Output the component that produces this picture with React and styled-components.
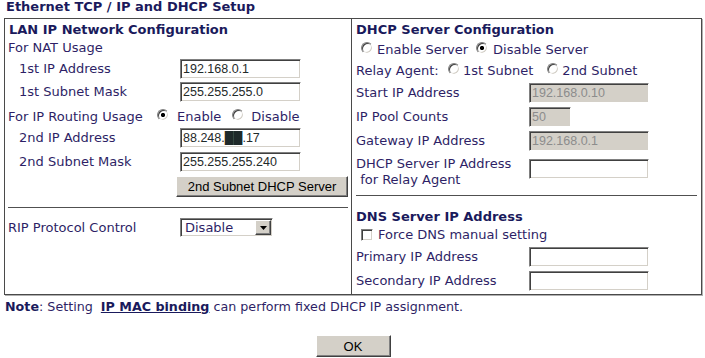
import React from 'react';
import styled, { createGlobalStyle } from 'styled-components';

const Global = createGlobalStyle`
  html, body { margin: 0; padding: 0; background: #fff; }
  body {
    font-family: "DejaVu Sans", Verdana, sans-serif;
    font-size: 13px;
    line-height: 16px;
    color: #2e1f66;
  }
`;

const Page = styled.div`
  width: 698px;
  padding: 0 4px;
`;

const Title = styled.div`
  height: 18px;
  padding-left: 2px;
  font-weight: bold;
  font-size: 13px;
  line-height: 14px;
  color: #1a1a5c;
  white-space: nowrap;
`;

const Table = styled.div`
  display: grid;
  grid-template-columns: 347px 348px;
  height: 275px;
  border: 1px solid #4a4a4a;
  box-shadow: 1px 1px 0 #b0b0b0;
`;

const Cell = styled.div`
  display: flex;
  flex-direction: column;
  padding-top: 3px;
  border-right: ${p => (p.$divider ? '1px solid #4a4a4a' : 'none')};
`;

const SectionHead = styled.div`
  height: ${p => p.$h || 17}px;
  margin-top: ${p => p.$mt || 0}px;
  padding-left: 4px;
  font-weight: bold;
  color: #1a1a5c;
  white-space: nowrap;
`;

const Row = styled.div`
  display: flex;
  align-items: ${p => p.$align || 'center'};
  height: ${p => p.$h || 24}px;
  box-sizing: border-box;
  padding-left: ${p => p.$pl || 0}px;
  padding-top: ${p => p.$pt || 0}px;
  margin-top: ${p => p.$mt || 0}px;
  white-space: nowrap;
`;

const Label = styled.span`
  flex: none;
  width: ${p => (p.$w ? `${p.$w}px` : 'auto')};
  padding-top: ${p => p.$pt || 0}px;
  white-space: nowrap;
`;

const TextInput = styled.input`
  flex: none;
  box-sizing: border-box;
  width: ${p => p.$w || 120}px;
  height: 20px;
  margin: ${p => p.$mt || 0}px 0 0 0;
  padding: 0 2px;
  font-family: "Liberation Sans", Arial, "DejaVu Sans", sans-serif;
  font-size: 12.5px;
  color: #1f2a2a;
  background: #fff;
  border: 1px solid;
  border-color: #808080 #ffffff #ffffff #808080;
  box-shadow: inset 1px 1px 0 #404040, inset -1px -1px 0 #d4d0c8;
  outline: none;
  &:disabled {
    background: #d4d0c8;
    color: #8c8c8c;
    -webkit-text-fill-color: #8c8c8c;
    opacity: 1;
  }
`;

const Option = styled.label`
  display: inline-flex;
  align-items: center;
  gap: ${p => p.$gap || 4}px;
  margin-right: ${p => p.$mr || 0}px;
  margin-left: ${p => p.$ml || 0}px;
`;

const Radio = styled.input.attrs({ type: 'radio' })`
  appearance: none;
  -webkit-appearance: none;
  flex: none;
  width: 12px;
  height: 12px;
  margin: 0 0 4px 0;
  border-radius: 50%;
  border: 1px solid;
  border-color: #808080 #ffffff #ffffff #808080;
  box-shadow: inset 1px 1px 0 #404040, inset -1px -1px 0 #d4d0c8;
  background: #fff;
  &:checked {
    background: radial-gradient(circle, #000 0 1.8px, #fff 2.4px);
  }
`;

const Checkbox = styled.input.attrs({ type: 'checkbox' })`
  appearance: none;
  -webkit-appearance: none;
  flex: none;
  width: 12px;
  height: 12px;
  margin: 0;
  border: 1px solid;
  border-color: #808080 #ffffff #ffffff #808080;
  box-shadow: inset 1px 1px 0 #404040, inset -1px -1px 0 #d4d0c8;
  background: #fff;
`;

const Button = styled.button`
  flex: none;
  box-sizing: border-box;
  width: ${p => p.$w}px;
  height: ${p => p.$h || 21}px;
  margin: ${p => p.$mt || 0}px 0 0 ${p => p.$ml || 0}px;
  padding: 0;
  font-family: "Liberation Sans", Arial, sans-serif;
  font-size: 13px;
  color: #000;
  background: #d4d0c8;
  border: 1px solid;
  border-color: #ffffff #404040 #404040 #ffffff;
  box-shadow: inset -1px -1px 0 #808080;
  white-space: nowrap;
`;

const Rule = styled.div`
  height: 0;
  margin: ${p => p.$mt || 0}px ${p => p.$mr || 3}px 0 ${p => p.$ml || 3}px;
  border-top: 1px solid #505050;
`;

const SelectBox = styled.div`
  position: relative;
  flex: none;
  width: 93px;
  height: 19px;
`;

const Select = styled.select`
  appearance: none;
  -webkit-appearance: none;
  box-sizing: border-box;
  width: 100%;
  height: 100%;
  margin: 0;
  padding: 0 0 0 4px;
  font-family: "DejaVu Sans", Verdana, sans-serif;
  font-size: 13px;
  color: #2e1f66;
  background: #fff;
  border: 1px solid;
  border-color: #808080 #ffffff #ffffff #808080;
  box-shadow: inset 1px 1px 0 #404040, inset -1px -1px 0 #d4d0c8;
  border-radius: 0;
  outline: none;
`;

const SelectArrow = styled.span`
  position: absolute;
  right: 2px;
  top: 2px;
  width: 16px;
  height: 15px;
  box-sizing: border-box;
  display: flex;
  align-items: center;
  justify-content: center;
  background: #d4d0c8;
  border: 1px solid;
  border-color: #ffffff #404040 #404040 #ffffff;
  box-shadow: inset -1px -1px 0 #808080;
  pointer-events: none;
`;

const Note = styled.div`
  margin-top: 4px;
  padding-left: 1px;
  font-size: 12.7px;
  line-height: 16px;
  color: #2e1f66;
  white-space: nowrap;
`;

const NoteStrong = styled.strong`
  color: #1a1a5c;
`;

const NoteLink = styled.a`
  font-weight: bold;
  color: #1a1a5c;
  text-decoration: underline;
`;

const ButtonBar = styled.div`
  display: flex;
  justify-content: center;
  margin-top: 20px;
`;

function Arrow() {
  return (
    <svg width="7" height="4" viewBox="0 0 7 4">
      <path d="M0 0h7L3.5 4z" fill="#000" />
    </svg>
  );
}

export default function App() {
  return (
    <>
      <Global />
      <Page>
        <Title>Ethernet TCP / IP and DHCP Setup</Title>
        <Table>
          <Cell $divider>
            <SectionHead>LAN IP Network Configuration</SectionHead>
            <Row $h={18} $pl={3}>For NAT Usage</Row>
            <Row $h={23} $pl={14}>
              <Label $w={161}>1st IP Address</Label>
              <TextInput $w={121} defaultValue="192.168.0.1" />
            </Row>
            <Row $h={23} $pl={14}>
              <Label $w={161}>1st Subnet Mask</Label>
              <TextInput $w={121} defaultValue="255.255.255.0" />
            </Row>
            <Row $h={23} $pl={3} $pt={5}>
              <Label $w={149}>For IP Routing Usage</Label>
              <Option $gap={8} $mr={11}>
                <Radio name="routing" defaultChecked />
                Enable
              </Option>
              <Option $gap={7}>
                <Radio name="routing" />
                Disable
              </Option>
            </Row>
            <Row $pl={14}>
              <Label $w={161}>2nd IP Address</Label>
              <TextInput $w={121} defaultValue={'88.248.\u2588\u2588.17'} />
            </Row>
            <Row $pl={14}>
              <Label $w={161}>2nd Subnet Mask</Label>
              <TextInput $w={121} defaultValue="255.255.255.240" />
            </Row>
            <Row $h={25} $align="flex-start">
              <Button $w={172} $mt={2} $ml={171}>2nd Subnet DHCP Server</Button>
            </Row>
            <Rule $mt={8} />
            <Row $h={19} $mt={10} $pl={3}>
              <Label $w={172}>RIP Protocol Control</Label>
              <SelectBox>
                <Select defaultValue="disable">
                  <option value="disable">Disable</option>
                  <option value="enable">Enable</option>
                </Select>
                <SelectArrow>
                  <Arrow />
                </SelectArrow>
              </SelectBox>
            </Row>
          </Cell>

          <Cell>
            <SectionHead>DHCP Server Configuration</SectionHead>
            <Row $h={22} $pl={9}>
              <Option $gap={4} $mr={8}>
                <Radio name="server" />
                Enable Server
              </Option>
              <Option $gap={5}>
                <Radio name="server" defaultChecked />
                Disable Server
              </Option>
            </Row>
            <Row $h={20} $pl={4}>
              <Label $w={92}>Relay Agent:</Label>
              <Option $gap={3} $mr={14}>
                <Radio name="relay" />
                1st Subnet
              </Option>
              <Option $gap={3}>
                <Radio name="relay" />
                2nd Subnet
              </Option>
            </Row>
            <Row $pl={4}>
              <Label $w={173}>Start IP Address</Label>
              <TextInput $w={120} disabled defaultValue="192.168.0.10" />
            </Row>
            <Row $pl={4}>
              <Label $w={173}>IP Pool Counts</Label>
              <TextInput $w={42} disabled defaultValue="50" />
            </Row>
            <Row $pl={4}>
              <Label $w={173}>Gateway IP Address</Label>
              <TextInput $w={120} disabled defaultValue="192.168.0.1" />
            </Row>
            <Row $h={36} $pl={4} $align="flex-start">
              <Label $w={173} $pt={3}>
                DHCP Server IP Address
                <br />
                {'\u00a0for Relay Agent'}
              </Label>
              <TextInput $w={120} $mt={6} defaultValue="" />
            </Row>
            <Rule $mt={6} $ml={4} $mr={3} />
            <SectionHead $mt={13} $h={16}>DNS Server IP Address</SectionHead>
            <Row $h={20} $pl={9}>
              <Option $gap={5}>
                <Checkbox />
                Force DNS manual setting
              </Option>
            </Row>
            <Row $pl={4}>
              <Label $w={173}>Primary IP Address</Label>
              <TextInput $w={120} defaultValue="" />
            </Row>
            <Row $pl={4}>
              <Label $w={173}>Secondary IP Address</Label>
              <TextInput $w={120} defaultValue="" />
            </Row>
          </Cell>
        </Table>

        <Note>
          <NoteStrong>Note</NoteStrong>: Setting&nbsp; <NoteLink href="#">IP MAC binding</NoteLink> can perform fixed DHCP IP assignment.
        </Note>
        <ButtonBar>
          <Button $w={75} $h={22}>OK</Button>
        </ButtonBar>
      </Page>
    </>
  );
}
